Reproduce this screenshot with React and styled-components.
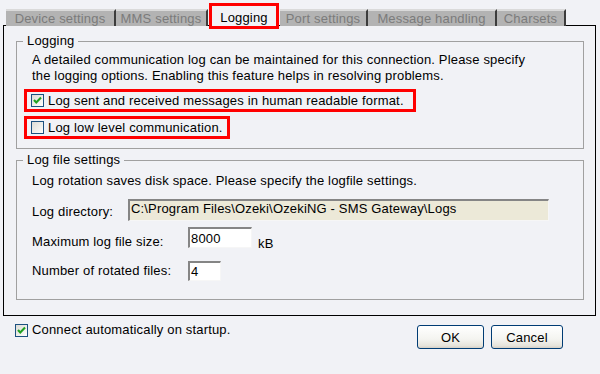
import React from 'react';
import styled, { createGlobalStyle } from 'styled-components';

const Global = createGlobalStyle`
  html, body { margin: 0; padding: 0; background: #f1f2f6; }
  body { font-family: "Liberation Sans", Arial, sans-serif; font-size: 13px; color: #000; letter-spacing: 0.17px; }
  * { box-sizing: border-box; }
`;

const Window = styled.div`
  width: 600px;
  height: 374px;
  background: #f1f2f6;
  padding-top: 3px;
  overflow: hidden;
  display: flex;
  flex-direction: column;
`;

const TabStrip = styled.div`
  display: flex;
  align-items: flex-end;
  height: 23px;
  padding-left: 6px;
  margin-bottom: -1px;
  position: relative;
  z-index: 1;
`;

const Tab = styled.div`
  width: ${p => p.$w}px;
  height: 17px;
  background: #b3b3b3;
  border-top: 2px solid #dadada;
  border-right: 2px solid #3c3c3c;
  color: #7b7b7b;
  display: flex;
  align-items: center;
  justify-content: center;
  line-height: 14px;
  white-space: nowrap;
`;

const ActiveTab = styled.div`
  width: 70px;
  height: 26px;
  margin: 0 1px -3px 1px;
  border: 3px solid #ff0000;
  background: #f1f2f6;
  color: #000;
  display: flex;
  justify-content: center;
  padding-top: 4px;
  line-height: 15px;
  white-space: nowrap;
`;

const Panel = styled.div`
  margin-left: 3px;
  width: 593px;
  height: 291px;
  border: 1px solid #000;
  padding: 0 11px 0 12px;
  display: flex;
  flex-direction: column;
`;

const Group = styled.fieldset`
  margin: ${p => p.$mt}px 0 0;
  padding: ${p => p.$pt}px 0 ${p => p.$pb}px 6px;
  border: 1px solid #a0a0a0;
  min-width: 0;
  display: flex;
  flex-direction: column;
  align-items: flex-start;
`;

const Legend = styled.legend`
  padding: 0 4px;
  line-height: 16px;
`;

const Para = styled.p`
  margin: ${p => p.$mt || 0}px 0 0;
  padding-left: 9px;
  line-height: 16px;
`;

const Marked = styled.div`
  width: ${p => p.$w}px;
  height: 23px;
  margin: ${p => p.$mt}px 0 0 1px;
  border: 3px solid #ff0000;
  padding-left: 4px;
  display: flex;
  align-items: center;
  gap: 4px;
  white-space: nowrap;
`;

const Box = styled.span`
  width: 13px;
  height: 13px;
  flex: none;
  border: 1px solid #1c5180;
  background: linear-gradient(135deg, #dcdcd6 0%, #f4f4f0 70%, #ffffff 100%);
  display: flex;
  align-items: center;
  justify-content: center;
`;

const Check = ({ on }) => (
  <Box>
    {on && (
      <svg width="11" height="11" viewBox="0 0 11 11">
        <path d="M2 5 L4.3 7.5 L9 2.6" fill="none" stroke="#21a121" strokeWidth="2.1" />
      </svg>
    )}
  </Box>
);

const FieldRow = styled.div`
  display: flex;
  align-items: flex-start;
  margin-top: ${p => p.$mt}px;
  padding-left: 9px;
`;

const Label = styled.span`
  width: ${p => p.$w}px;
  padding-top: ${p => p.$pt}px;
  line-height: 16px;
  white-space: nowrap;
`;

const Input = styled.div`
  width: ${p => p.$w}px;
  height: ${p => p.$h}px;
  background: ${p => (p.$ro ? '#ece9d8' : '#ffffff')};
  border-top: 2px solid #858585;
  border-left: 2px solid #858585;
  border-right: 1px solid #f6f6f6;
  border-bottom: 1px solid #f6f6f6;
  padding: ${p => p.$pt}px 0 0 ${p => p.$pl}px;
  line-height: 14px;
  white-space: nowrap;
  overflow: hidden;
`;

const Unit = styled.span`
  margin-left: 6px;
  padding-top: 9px;
  line-height: 16px;
`;

const Footer = styled.div`
  display: flex;
  justify-content: space-between;
  align-items: flex-start;
  padding: 0 37px 0 15px;
`;

const CheckLine = styled.label`
  display: flex;
  align-items: center;
  gap: 4px;
  margin-top: 7px;
  height: 14px;
  line-height: 16px;
`;

const Buttons = styled.div`
  display: flex;
  gap: 7px;
  margin-top: 9px;
`;

const Button = styled.button`
  width: ${p => p.$w}px;
  height: 24px;
  border: 1px solid #003c74;
  border-radius: 3px;
  background: linear-gradient(#ffffff 0%, #f4f4f0 60%, #e6e3da 90%, #d6d0c5 100%);
  font-family: "Liberation Sans", Arial, sans-serif;
  font-size: 13px;
  letter-spacing: 0.17px;
  color: #000;
  padding: 2px 0 0;
  line-height: 16px;
`;

export default function App() {
  return (
    <>
      <Global />
      <Window>
        <TabStrip>
          <Tab $w={110}>Device settings</Tab>
          <Tab $w={92}>MMS settings</Tab>
          <ActiveTab>Logging</ActiveTab>
          <Tab $w={88}>Port settings</Tab>
          <Tab $w={129}>Message handling</Tab>
          <Tab $w={69}>Charsets</Tab>
        </TabStrip>
        <Panel>
          <Group $mt={7} $pt={3} $pb={9}>
            <Legend>Logging</Legend>
            <Para>
              A detailed communication log can be maintained for this connection. Please specify
              <br />
              the logging options. Enabling this feature helps in resolving problems.
            </Para>
            <Marked $w={392} $mt={5}>
              <Check on />
              <span>Log sent and received messages in human readable format.</span>
            </Marked>
            <Marked $w={206} $mt={4}>
              <Check />
              <span>Log low level communication.</span>
            </Marked>
          </Group>
          <Group $mt={3} $pt={5} $pb={18}>
            <Legend>Log file settings</Legend>
            <Para>Log rotation saves disk space. Please specify the logfile settings.</Para>
            <FieldRow $mt={10}>
              <Label $w={96} $pt={5}>Log directory:</Label>
              <Input $ro $w={421} $h={22} $pt={1} $pl={1}>
                C:\Program Files\Ozeki\OzekiNG - SMS Gateway\Logs
              </Input>
            </FieldRow>
            <FieldRow $mt={6}>
              <Label $w={156} $pt={7}>Maximum log file size:</Label>
              <Input $w={64} $h={21} $pt={3} $pl={1}>8000</Input>
              <Unit>kB</Unit>
            </FieldRow>
            <FieldRow $mt={9}>
              <Label $w={156} $pt={2}>Number of rotated files:</Label>
              <Input $w={33} $h={20} $pt={2} $pl={1}>4</Input>
            </FieldRow>
          </Group>
        </Panel>
        <Footer>
          <CheckLine>
            <Check on />
            <span>Connect automatically on startup.</span>
          </CheckLine>
          <Buttons>
            <Button $w={67}>OK</Button>
            <Button $w={72}>Cancel</Button>
          </Buttons>
        </Footer>
      </Window>
    </>
  );
}
